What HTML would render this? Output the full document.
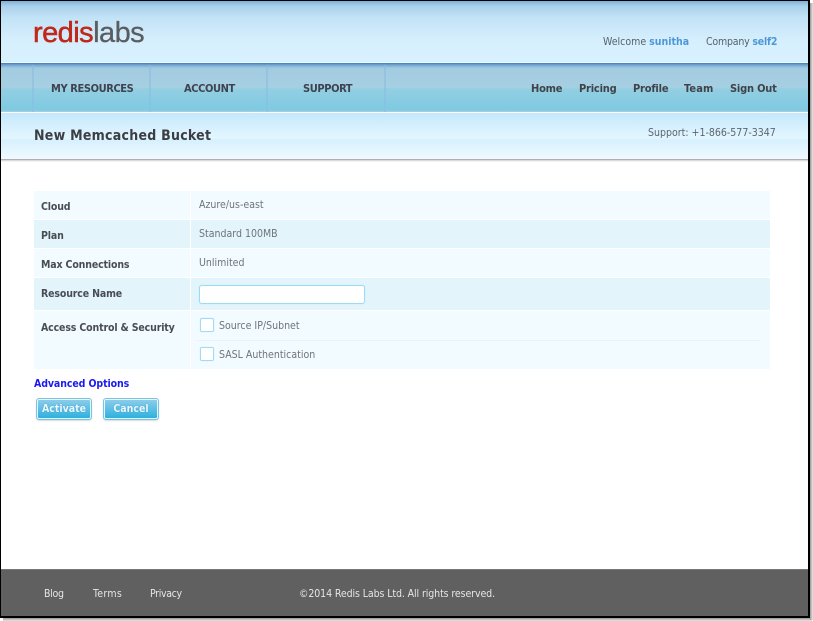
<!DOCTYPE html>
<html><head><meta charset="utf-8">
<style>
html,body{margin:0;padding:0;background:#fff;width:813px;height:621px;overflow:hidden}
body{position:relative;font-family:"DejaVu Sans Condensed","DejaVu Sans","Liberation Sans",sans-serif;font-stretch:condensed}
.a{position:absolute;white-space:nowrap;line-height:14px}
#frame{position:absolute;left:0;top:0;width:807px;height:615px;border:1px solid #000;border-width:1px 2px 2px 1px;box-sizing:content-box;z-index:10;pointer-events:none}
#sh1{position:absolute;left:3px;top:618px;width:809px;height:3px;background:linear-gradient(#999,#e8e8e8)}
#sh2{position:absolute;left:810px;top:3px;width:3px;height:617px;background:linear-gradient(90deg,#999,#e8e8e8)}
#hd{position:absolute;left:1px;top:1px;width:807px;height:61px;background:linear-gradient(#7fb0da 0,#a9d0ea 5px,#c2e2f6 16px,#d6effd 40px,#d9f1ff 60px)}
#wl{position:absolute;left:1px;top:62px;width:807px;height:1px;background:#eef8ff}
#nav{position:absolute;left:1px;top:63px;width:807px;height:49px;background:linear-gradient(#3f80bb 0,#75a6cf 2px,#a2cbe1 5px,#a7cfe2 24px,#93cfe2 26px,#7fc9e2 47px,#a9d2e2 49px)}
.sep{position:absolute;top:65px;width:2px;height:47px;background:linear-gradient(#8fbcdc,#86c0e4);opacity:.6}
#sub{position:absolute;left:1px;top:113px;width:807px;height:46px;background:linear-gradient(#c5e8fc 0,#e3f6ff 25px,#d6f0fe 27px,#eff9ff 45px)}
#subs{position:absolute;left:1px;top:159px;width:807px;height:3px;background:linear-gradient(#999,#ddd,#fff)}
.nv{font-size:11px;font-weight:bold;color:#3d4450;letter-spacing:-.4px}
.tn{font-size:11px;font-weight:bold;color:#3f4349;letter-spacing:-.2px}
.lb{font-size:10.5px;font-weight:bold;color:#484d52;letter-spacing:-.15px;left:41px}
.vl{font-size:10.5px;color:#6f7479;left:199px}
.row{position:absolute;left:34px;width:736px}
.cb{position:absolute;left:200px;width:12px;height:12px;border:1px solid #a0dcf4;border-radius:2px;background:#fff;box-shadow:0 0 1px #bfe8f8}
.btn{position:absolute;top:399px;height:18px;border:1px solid #e4f5fb;outline:1px solid #7cc3e0;border-radius:2px;background:linear-gradient(#8ccbe8,#5bc0e6 50%,#2fb0de);box-shadow:0 1px 2px #9ab;color:#eaf8ff;font-size:10.5px;font-weight:bold;text-align:center;line-height:18px;text-shadow:0 0 1px #3a8ab0}
.ft{font-size:10.5px;color:#e4e6e8;top:587px;letter-spacing:-.1px}
</style></head>
<body>
<div id="hd"></div><div id="wl"></div><div id="nav"></div>
<div class="sep" style="left:32px"></div><div class="sep" style="left:149px"></div><div class="sep" style="left:266px"></div><div class="sep" style="left:384px"></div>
<div id="sub"></div><div id="subs"></div>

<div class="a" style="left:33px;top:16px;font:normal 29px/34px 'Liberation Sans',sans-serif;letter-spacing:-.55px;color:#c0281a;-webkit-text-stroke:.5px #c0281a">redis<span style="color:#5a5c5e;-webkit-text-stroke:.25px #5a5c5e">labs</span></div>

<div class="a" style="left:603px;top:35px;font-size:10.5px;color:#55626e">Welcome <b style="color:#4d97d8;font-weight:bold">sunitha</b></div>
<div class="a" style="left:706px;top:35px;font-size:10.5px;color:#55626e;letter-spacing:-.2px">Company <b style="color:#4d97d8;font-weight:bold">self2</b></div>

<div class="a nv" style="left:51px;top:82px">MY RESOURCES</div>
<div class="a nv" style="left:184px;top:82px">ACCOUNT</div>
<div class="a nv" style="left:303px;top:82px">SUPPORT</div>
<div class="a tn" style="left:531px;top:82px">Home</div>
<div class="a tn" style="left:579px;top:82px">Pricing</div>
<div class="a tn" style="left:633px;top:82px">Profile</div>
<div class="a tn" style="left:684px;top:82px;letter-spacing:.1px">Team</div>
<div class="a tn" style="left:730px;top:82px">Sign Out</div>

<div class="a" style="left:34px;top:129px;font-size:14px;font-weight:bold;color:#3b3e42;letter-spacing:.25px">New Memcached Bucket</div>
<div class="a" style="left:648px;top:126px;font-size:10.5px;color:#5c666e">Support: +1-866-577-3347</div>

<div class="row" style="top:191px;height:28px;background:#f2fbff"></div>
<div class="row" style="top:220px;height:28px;background:#e3f4fb"></div>
<div class="row" style="top:249px;height:28px;background:#f2fbff"></div>
<div class="row" style="top:278px;height:32px;background:#e3f4fb"></div>
<div class="row" style="top:311px;height:58px;background:#f2fbff"></div>
<div style="position:absolute;left:197px;top:340px;width:563px;height:1px;background:#e6f5fb"></div>
<div style="position:absolute;left:190px;top:191px;width:1px;height:178px;background:#fff"></div>

<div class="a lb" style="top:200px">Cloud</div>
<div class="a lb" style="top:229px">Plan</div>
<div class="a lb" style="top:258px">Max Connections</div>
<div class="a lb" style="top:287px">Resource Name</div>
<div class="a lb" style="top:321px">Access Control &amp; Security</div>
<div class="a vl" style="top:198px">Azure/us-east</div>
<div class="a vl" style="top:227px">Standard 100MB</div>
<div class="a vl" style="top:256px">Unlimited</div>
<div style="position:absolute;left:199px;top:285px;width:164px;height:17px;border:1px solid #9adcf6;border-radius:3px;background:#fff;box-shadow:0 0 1px #a8e2f8"></div>
<div class="cb" style="top:318px"></div>
<div class="cb" style="top:347px"></div>
<div class="a vl" style="left:219px;top:319px">Source IP/Subnet</div>
<div class="a vl" style="left:219px;top:348px">SASL Authentication</div>

<div class="a" style="left:34px;top:377px;font-size:10.5px;font-weight:bold;color:#1a1aee;letter-spacing:-.1px">Advanced Options</div>

<div class="btn" style="left:37px;width:52px">Activate</div>
<div class="btn" style="left:104px;width:52px">Cancel</div>

<div style="position:absolute;left:1px;top:569px;width:807px;height:47px;background:#606060;border-top:1px solid #777;box-sizing:border-box"></div>
<div class="a ft" style="left:44px;letter-spacing:-.3px">Blog</div>
<div class="a ft" style="left:93px;letter-spacing:.3px">Terms</div>
<div class="a ft" style="left:150px;letter-spacing:-.35px">Privacy</div>
<div class="a ft" style="left:299px">©2014 Redis Labs Ltd. All rights reserved.</div>

<div id="sh1"></div><div id="sh2"></div>
<div id="frame"></div>
</body></html>
